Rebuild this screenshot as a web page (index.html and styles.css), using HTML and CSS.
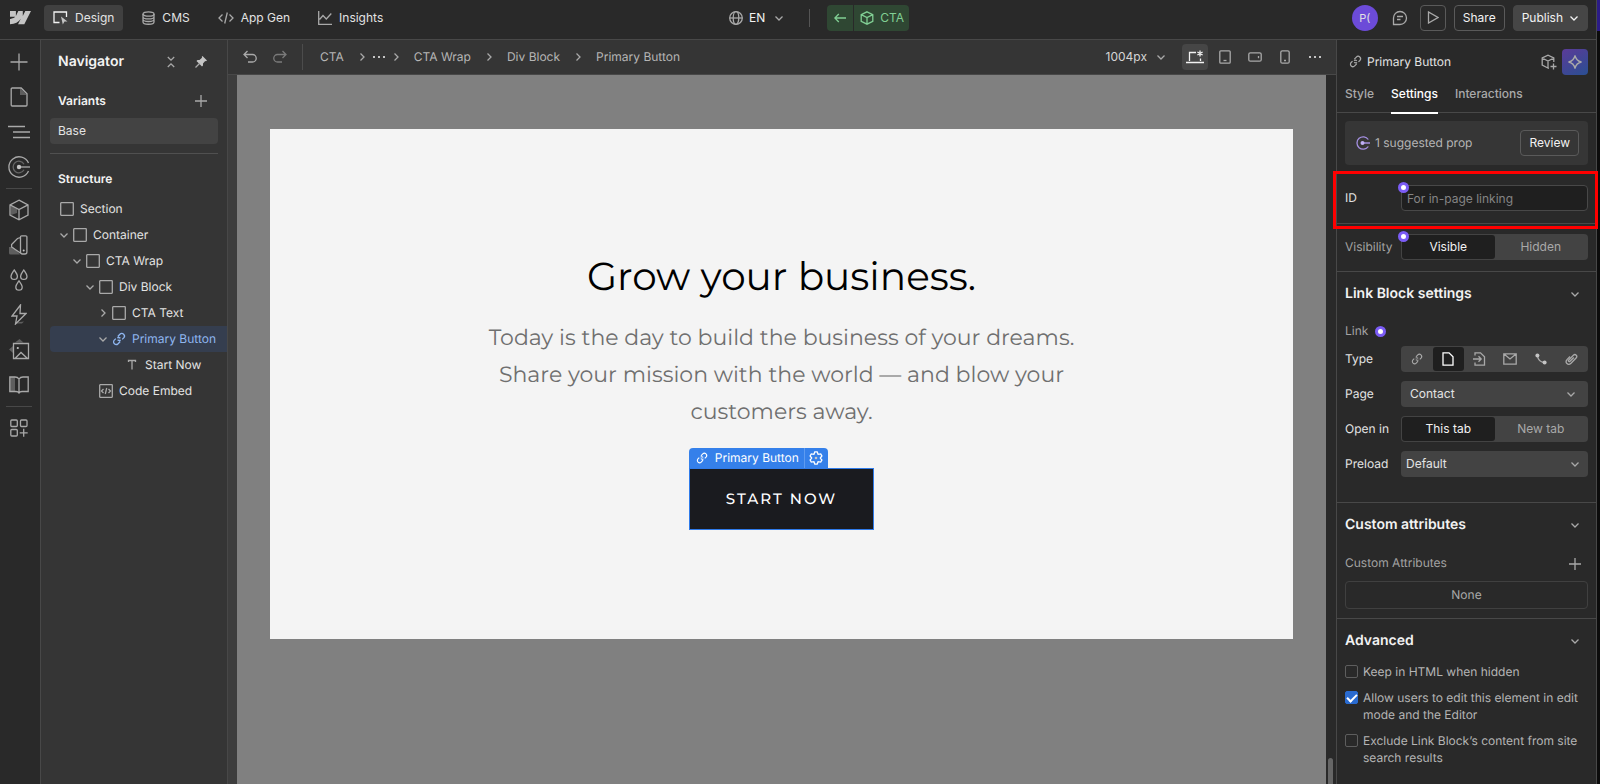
FILE: index.html
```
<!DOCTYPE html>
<html lang="en">

<head>
    <meta charset="UTF-8">
    <meta name="viewport" content="width=device-width, initial-scale=1.0">
    <title>CTA - Designer</title>
    <link rel="stylesheet" href="styles.css">
</head>
<body>
<svg class="defs" aria-hidden="true">
    <symbol id="i-down" viewBox="0 0 10 10"><path d="M1.5 3.5 5 7l3.500-3.500"/></symbol>
    <symbol id="i-right" viewBox="0 0 10 10"><path d="M3.500 1.500 7 5 3.500 8.500"/></symbol>
    <symbol id="i-plus" viewBox="0 0 12 12"><path d="M6 0v12M0 6h12"/></symbol>
    <symbol id="i-box" viewBox="0 0 14 14"><rect x=".7" y=".7" width="12.600" height="12.600" rx=".5"/></symbol>
    <symbol id="i-link" viewBox="0 0 14 14"><path d="M5.800 4.500 7.900 2.300a2.600 2.600 0 0 1 3.800 3.600L10.200 7.400M8.200 9.500 6.100 11.700A2.600 2.600 0 0 1 2.300 8.100L3.800 6.600M5.600 7.800A2.600 2.600 0 0 0 8.700 8M8.400 6.200A2.600 2.600 0 0 0 5.300 6"/></symbol>
    <symbol id="i-cube" viewBox="0 0 14 14"><path d="M7 .8 12.800 3.700v6.600L7 13.200 1.200 10.300V3.700zM1.200 3.700 7 6.600l5.800-2.900M7 6.600v6.600"/></symbol>
    <symbol id="i-dots" viewBox="0 0 14 14"><path class="solid" d="M1 6h2v2H1zM6 6h2v2H6zM11 6h2v2h-2z"/></symbol>
    <symbol id="i-code" viewBox="0 0 16 14"><path d="M4.500 3.500 1 7l3.500 3.500M11.500 3.500 15 7l-3.500 3.500M9.300 1.500 6.700 12.500"/></symbol>
</svg>

<div class="app">
    <header class="topbar">
        <nav class="modes">
            <svg class="logo" width="21" height="14" viewBox="0 0 21 14"><path d="M21 0 14.300 13.300H8l2.800-5.500C8.500 11.200 5.200 13 0 13.300V8s3.300-.2 5.200-2.200H0V0h5.900v4.900L8.300 0h4.500v4.900L15.300 0z"/></svg>
            <button class="mode active"><svg width="15" height="14" viewBox="0 0 15 14"><path d="M6.500 11.500H1V1h12.500v5"/><path class="solid" d="m8 5.500 6.500 5H11.500L9.800 13.500z"/></svg>Design</button>
            <button class="mode"><svg width="13" height="14" viewBox="0 0 13 14"><ellipse cx="6.500" cy="3" rx="5.500" ry="2.200"/><path d="M1 3v8c0 3 11 3 11 0V3M1 5.700c0 2.900 11 2.900 11 0M1 8.300c0 2.900 11 2.900 11 0"/></svg>CMS</button>
            <button class="mode"><svg width="16" height="14"><use href="#i-code"/></svg>App Gen</button>
            <button class="mode"><svg width="14" height="14" viewBox="0 0 14 14"><path d="M.7 0v13.300H14M1.500 8.500 5 4.500l3.300 3.500 5-5.500"/></svg>Insights</button>
        </nav>
        <div class="context">
            <button class="locale"><svg width="14" height="14" viewBox="0 0 14 14"><circle cx="7" cy="7" r="6.300"/><ellipse cx="7" cy="7" rx="2.800" ry="6.300"/><path d="M.7 7h12.600"/></svg>EN<svg width="10" height="10"><use href="#i-down"/></svg></button>
            <div class="crumb-component">
                <button aria-label="Back"><svg width="12" height="10" viewBox="0 0 12 10"><path d="M12 5H.8M4.800 1l-4 4 4 4"/></svg></button>
                <button><svg width="14" height="14"><use href="#i-cube"/></svg>CTA</button>
            </div>
        </div>
        <div class="actions">
            <span class="avatar">P(</span>
            <button class="icon-btn" aria-label="Comments"><svg width="16" height="16" viewBox="0 0 16 16"><path d="M1.500 14.500V8a6.500 6.500 0 1 1 6.500 6.500zM5 6.500h6M5 9.500h3.500"/></svg></button>
            <button class="btn square" aria-label="Preview"><svg width="12" height="13" viewBox="0 0 12 13"><path d="M1.500 1v11l9.500-5.500z"/></svg></button>
            <button class="btn">Share</button>
            <button class="btn publish">Publish<svg width="10" height="10"><use href="#i-down"/></svg></button>
        </div>
    </header>

    <div class="workspace">
        <nav class="rail">
            <button aria-label="Add"><svg width="18" height="18" viewBox="0 0 18 18"><path d="M9 .5v17M.5 9h17"/></svg></button>
            <button aria-label="Pages"><svg width="18" height="20" viewBox="0 0 18 20"><path class="shade" d="M10 1v7h7z"/><path d="M1.200 2a1 1 0 0 1 1-1h9L17 6.800V18a1 1 0 0 1-1 1H2.200a1 1 0 0 1-1-1z"/></svg></button>
            <button aria-label="Navigator"><svg width="22" height="14" viewBox="0 0 22 14"><path d="M0 1.500h17M5 7h17M5 12.500h17"/></svg></button>
            <button aria-label="Components"><svg width="22" height="22" viewBox="0 0 22 22"><path d="M20.500 7A10.200 10.200 0 1 0 20.500 15"/><path class="dim" d="M16 8.200a5.800 5.800 0 1 0 0 5.600"/><path d="M11 11h11"/><circle class="solid" cx="11" cy="11" r="2.200"/></svg></button>
            <hr>
            <button aria-label="Assets library"><svg width="20" height="22" viewBox="0 0 20 22"><path class="shade" d="M2 7l6 3v4l-6 2z"/><path d="M10 1.200 19 5.800v10.400l-9 4.600-9-4.600V5.800zM1 5.800l9 4.700 9-4.700M10 10.500v10.300"/></svg></button>
            <button aria-label="Styles"><svg width="20" height="20" viewBox="0 0 20 20"><path class="shade" d="M0 12h4l7 7.500H1.500A1.500 1.500 0 0 1 0 18z"/><path d="M11.500 2a1.200 1.200 0 0 1 1.200-1.200h4a1.200 1.200 0 0 1 1.200 1.200v15a2 2 0 0 1-2 2h-2.400a2 2 0 0 1-2-2zM11.500 2.500 8.500 3.500 2.600 9.500v2.500l9.500 6.500"/><circle class="solid" cx="14.700" cy="15.500" r="1"/></svg></button>
            <button aria-label="Variables"><svg width="18" height="22" viewBox="0 0 18 22"><path d="M4.200 1C2.500 3.500 1 5.300 1 7.200a3.200 3.200 0 0 0 6.400 0C7.400 5.300 6 3.500 4.200 1zM13.800 1c-1.700 2.500-3.200 4.300-3.200 6.200a3.200 3.200 0 0 0 6.400 0C17 5.300 15.500 3.500 13.800 1zM9 11.800c-1.700 2.500-3.200 4.300-3.200 6.200a3.200 3.200 0 0 0 6.400 0c0-1.900-1.400-3.700-3.200-6.200z"/></svg></button>
            <button aria-label="Interactions"><svg width="16" height="21" viewBox="0 0 16 21"><path class="shade" d="m5 18.500 8-1-2 2H5z"/><path d="M9.500 1 1 12h5L4.500 20 15 9.500H9z"/></svg></button>
            <button aria-label="Assets"><svg width="21" height="21" viewBox="0 0 21 21"><path class="shade" d="M0 10.500 4 7v7zM6 3.500 10.500 0l4 3.500z"/><path d="M4.500 4.500h15v15h-15zM6 19.500l6-6 6.500 6"/><circle class="solid" cx="8.800" cy="9" r="1.100"/></svg></button>
            <button aria-label="Libraries"><svg width="20" height="18" viewBox="0 0 20 18"><path class="shade" d="M1 1h5v14H1z"/><path d="M10 3C9 1.500 7.500 1 6 1H.8v14.500H7c1.500 0 2.500.5 3 1.500.5-1 1.500-1.500 3-1.500h6.200V1H14c-1.500 0-3 .5-4 2zM10 3v13"/></svg></button>
            <hr>
            <button aria-label="Apps"><svg width="18" height="18" viewBox="0 0 18 18"><rect x=".8" y="1" width="6.500" height="6.500" rx="1"/><rect x="10.500" y="1" width="6.500" height="6.500" rx="1"/><rect x=".8" y="10.500" width="6.500" height="6.500" rx="1"/><path d="M13.700 9.800v8M9.700 13.800h8"/></svg></button>
        </nav>

        <aside class="navigator">
            <div class="nav-title">
                <h2>Navigator</h2>
                <button class="icon-btn" aria-label="Collapse all"><svg width="8" height="12" viewBox="0 0 8 12"><path d="m.8 1 3.200 3.200L7.200 1M.8 11 4 7.800 7.200 11"/></svg></button>
                <button class="icon-btn" aria-label="Pin panel"><svg width="12" height="12" viewBox="0 0 12 12"><path class="solid" d="M7.500 0 12 4.500l-1 .8-.8-.2L8 7.500V9.500L7 10.500 1.500 5l1-1h2L7 1.800 6.800.8z"/><path d="M4.500 7.500.5 11.500"/></svg></button>
            </div>
            <div class="nav-sub">
                <h3>Variants</h3>
                <button class="icon-btn" aria-label="Add variant"><svg width="12" height="12"><use href="#i-plus"/></svg></button>
            </div>
            <button class="variant">Base</button>
            <hr>
            <h3 class="structure">Structure</h3>
            <ul class="tree">
                <li class="d0"><svg width="14" height="14"><use href="#i-box"/></svg>Section</li>
                <li class="d1"><svg class="toggle" width="10" height="10"><use href="#i-down"/></svg><svg width="14" height="14"><use href="#i-box"/></svg>Container</li>
                <li class="d2"><svg class="toggle" width="10" height="10"><use href="#i-down"/></svg><svg width="14" height="14"><use href="#i-box"/></svg>CTA Wrap</li>
                <li class="d3"><svg class="toggle" width="10" height="10"><use href="#i-down"/></svg><svg width="14" height="14"><use href="#i-box"/></svg>Div Block</li>
                <li class="d4"><svg class="toggle" width="10" height="10"><use href="#i-right"/></svg><svg width="14" height="14"><use href="#i-box"/></svg>CTA Text</li>
                <li class="d4 selected"><svg class="toggle" width="10" height="10"><use href="#i-down"/></svg><svg width="14" height="14"><use href="#i-link"/></svg>Primary Button</li>
                <li class="d5"><svg width="14" height="14" viewBox="0 0 14 14"><path d="M3.500 4V2.500h7V4M7 2.500v9"/></svg>Start Now</li>
                <li class="d3"><svg width="14" height="14" viewBox="0 0 14 14"><rect x=".7" y=".7" width="12.600" height="12.600" rx=".5"/><path d="m4.500 5-2 2 2 2M9.500 5l2 2-2 2M7.700 4 6.300 10"/></svg>Code Embed</li>
            </ul>
        </aside>

        <main class="stage">
            <div class="toolbar">
                <button class="icon-btn undo" aria-label="Undo"><svg width="14" height="14" viewBox="0 0 14 14"><path d="M4.500 1 1 4.500 4.500 8M1 4.500h8.500a3.700 3.700 0 0 1 0 7.500H5"/></svg></button>
                <button class="icon-btn redo" aria-label="Redo"><svg width="14" height="14" viewBox="0 0 14 14"><path d="M9.500 1 13 4.500 9.500 8M13 4.500H4.500a3.700 3.700 0 0 0 0 7.500H9"/></svg></button>
                <nav class="breadcrumbs">
                    <a href="#">CTA</a>
                    <svg width="10" height="10"><use href="#i-right"/></svg>
                    <svg class="more" width="14" height="14"><use href="#i-dots"/></svg>
                    <svg width="10" height="10"><use href="#i-right"/></svg>
                    <a href="#">CTA Wrap</a>
                    <svg width="10" height="10"><use href="#i-right"/></svg>
                    <a href="#">Div Block</a>
                    <svg width="10" height="10"><use href="#i-right"/></svg>
                    <a href="#">Primary Button</a>
                </nav>
                <button class="size">1004px<svg width="10" height="10"><use href="#i-down"/></svg></button>
                <div class="devices">
                    <button class="active" aria-label="Desktop"><svg width="18" height="14" viewBox="0 0 18 14"><path d="M3.500 11V2.500H10M14.500 8.500v2.500M0 12.500h18M14 .5v6M11.400 2l5.200 3M16.600 2l-5.200 3"/></svg></button>
                    <button aria-label="Tablet"><svg width="12" height="14" viewBox="0 0 12 14"><rect x=".8" y=".8" width="10.400" height="12.400" rx="1"/><path d="M4.500 10.500h3"/></svg></button>
                    <button aria-label="Mobile landscape"><svg width="14" height="10" viewBox="0 0 14 10"><rect x=".8" y=".8" width="12.400" height="8.400" rx="1.500"/><path d="M10.500 4v2.200"/></svg></button>
                    <button aria-label="Mobile portrait"><svg width="10" height="14" viewBox="0 0 10 14"><rect x=".8" y=".8" width="8.400" height="12.400" rx="1.500"/><path d="M4 10.500h2"/></svg></button>
                    <button aria-label="More"><svg width="14" height="14"><use href="#i-dots"/></svg></button>
                </div>
            </div>
            <div class="canvas-wrap">
                <div class="canvas">
                    <section class="cta">
                        <h1>Grow your business.</h1>
                        <p>Today is the day to build the business of your dreams. Share your mission with the world — and blow your customers away.</p>
                        <div class="cta-link">
                            <div class="tag">
                                <span><svg width="12" height="12"><use href="#i-link"/></svg>Primary Button</span>
                                <button aria-label="Element settings"><svg width="14" height="14" viewBox="0 0 14 14"><path d="M5.800.9h2.400l.9 2.400 2.600-.4 1.200 2.100L11.300 7l1.600 2-1.200 2.100-2.600-.4-.9 2.400H5.800l-.9-2.400-2.600.4L1.100 9l1.600-2-1.600-2 1.200-2.100 2.600.4z"/><circle class="solid" cx="7" cy="7" r="1.300"/></svg></button>
                            </div>
                            <a href="#">START NOW</a>
                        </div>
                    </section>
                </div>
                <div class="scroll"></div>
            </div>
        </main>

        <aside class="panel">
            <div class="panel-title">
                <svg width="13" height="13"><use href="#i-link"/></svg>
                <span>Primary Button</span>
                <button class="icon-btn" aria-label="Create component"><svg width="16" height="16" viewBox="0 0 16 16"><path d="M8 14.300 6.800 14 1.200 11.100V4L7 1.200 12.800 4v4M1.200 4 7 7l5.800-3M7 7v7M12.500 9.500v6M9.500 12.500h6"/></svg></button>
                <button class="ai" aria-label="Assistant"><svg width="14" height="14" viewBox="0 0 14 14"><path d="M7 .5C7.800 4.500 9.500 6.200 13.500 7 9.500 7.800 7.800 9.500 7 13.500 6.200 9.500 4.500 7.800.5 7 4.500 6.200 6.200 4.500 7 .5z"/></svg></button>
            </div>
            <div class="tabs">
                <button>Style</button>
                <button class="active">Settings</button>
                <button>Interactions</button>
            </div>
            <div class="suggest">
                <svg width="14" height="14" viewBox="0 0 14 14"><path d="M12.300 3.500A6.200 6.200 0 1 0 12.300 10.500M6.500 7H14"/><circle class="solid" cx="6.500" cy="7" r="2"/></svg>
                <span>1 suggested prop</span>
                <button class="btn">Review</button>
            </div>
            <div class="block id-block">
                <div class="field">
                    <label for="elId">ID</label>
                    <div class="control"><input type="text" id="elId" placeholder="For in-page linking"><i class="dot"></i></div>
                </div>
            </div>
            <div class="block visibility-block">
                <div class="field">
                    <span class="name muted">Visibility</span>
                    <div class="control segment"><button class="on">Visible</button><button>Hidden</button><i class="dot"></i></div>
                </div>
            </div>
            <div class="block link-block">
                <h3>Link Block settings<svg width="10" height="10"><use href="#i-down"/></svg></h3>
                <div class="link-label">Link<i class="dot"></i></div>
                <div class="field">
                    <span class="name">Type</span>
                    <div class="control segment icons">
                        <button aria-label="URL"><svg width="12" height="12"><use href="#i-link"/></svg></button>
                        <button class="on" aria-label="Page"><svg width="12" height="14" viewBox="0 0 12 14"><path d="M1 .8h6l4 4v8.400H1z"/></svg></button>
                        <button aria-label="Page section"><svg width="13" height="14" viewBox="0 0 13 14"><path d="M2 3.500V.8h5.500l4 4v8.400H2v-2.700M0 7h8M5.500 4.300 8.200 7 5.500 9.700"/></svg></button>
                        <button aria-label="Email"><svg width="14" height="12" viewBox="0 0 14 12"><path d="M.8.8h12.400v10.400H.8zM1 1l6 5 6-5"/></svg></button>
                        <button aria-label="Phone"><svg width="12" height="12" viewBox="0 0 12 12"><path d="M2.500 3C3 6.500 5.500 9 9 9.500"/><circle class="solid" cx="2.400" cy="2.400" r="2"/><circle class="solid" cx="9.600" cy="9.600" r="2"/></svg></button>
                        <button aria-label="Attachment"><svg width="13" height="13" viewBox="0 0 13 13"><path d="M8.800 4.500 5 8.300c-1 1-2.300-.4-1.300-1.300L8.400 2.300c2-1.900 4.600.7 2.700 2.700L6 10.200c-3 2.800-6.600-.9-3.800-3.800L5 3.500"/></svg></button>
                    </div>
                </div>
                <div class="field">
                    <label for="page">Page</label>
                    <div class="control select"><select id="page" class="indent"><option>Contact</option></select><svg width="10" height="10" class="wide"><use href="#i-down"/></svg></div>
                </div>
                <div class="field">
                    <span class="name">Open in</span>
                    <div class="control segment"><button class="on">This tab</button><button>New tab</button></div>
                </div>
                <div class="field">
                    <label for="preload">Preload</label>
                    <div class="control select"><select id="preload"><option>Default</option></select><svg width="10" height="10"><use href="#i-down"/></svg></div>
                </div>
            </div>
            <div class="block attr-block">
                <h3>Custom attributes<svg width="10" height="10"><use href="#i-down"/></svg></h3>
                <div class="attr-head"><span>Custom Attributes</span><button class="icon-btn" aria-label="Add attribute"><svg width="12" height="12"><use href="#i-plus"/></svg></button></div>
                <div class="none">None</div>
            </div>
            <div class="block advanced">
                <h3>Advanced<svg width="10" height="10"><use href="#i-down"/></svg></h3>
                <label class="check"><input type="checkbox">Keep in HTML when hidden</label>
                <label class="check"><input type="checkbox" checked>Allow users to edit this element in edit mode and the Editor</label>
                <label class="check"><input type="checkbox">Exclude Link Block’s content from site search results</label>
            </div>
        </aside>
    </div>
</div>
<div class="edge"></div>
</body>

</html>
```
FILE: styles.css
```
*{
    box-sizing:border-box;
    margin:0;
    padding:0;
}
body{
    display:flex;
    height:100vh;
    overflow:hidden;
    background-color:#292929;
    color:#e3e3e3;
    font-family:Inter, sans-serif;
    font-size:12px;
    line-height:18px;
    text-rendering:geometricPrecision;
}
.defs{
    display:none;
}
svg{
    flex:none;
    fill:none;
    stroke:#a9a9a9;
    stroke-width:1.3;
}
.solid{
    fill:#c4c4c4;
    stroke:none;
}
.shade{
    fill:#5e5e5e;
    stroke:none;
}
.dim{
    stroke:#666;
}
button{
    display:flex;
    align-items:center;
    justify-content:center;
    background:none;
    border:none;
    color:inherit;
    font:inherit;
}
h2, h3{
    color:#f2f2f2;
    font-weight:600;
}
h2{
    font-size:14px;
}
h3{
    font-size:12px;
}
.app{
    flex:1;
    display:flex;
    flex-direction:column;
    min-width:0;
    border-right:1px solid #484848;
}
.edge{
    width:3px;
    background:linear-gradient(#2b1c86 31px, #0c0c0c 31px);
}

/* top bar */
.topbar{
    display:grid;
    grid-template-columns:1fr auto 1fr;
    align-items:center;
    height:40px;
    padding:0 8px 4px 10px;
    border-bottom:1px solid #484848;
}
.modes, .context, .actions, .crumb-component{
    display:flex;
    align-items:center;
}
.logo{
    margin-right:13px;
    fill:#c4c4c4;
    stroke:none;
}
.mode{
    height:26px;
    gap:7px;
    padding:0 9px;
    margin-right:10px;
    border-radius:4px;
}
.mode.active{
    background-color:#404040;
}
.mode.active svg{
    stroke:#f2f2f2;
}
.context{
    padding-left:40px;
}
.locale{
    gap:6px;
    padding-right:25px;
    border-right:1px solid #555;
    color:#f2f2f2;
}
.locale svg:last-child{
    margin-left:3px;
}
.crumb-component{
    margin-left:17px;
}
.crumb-component button{
    height:26px;
    padding:0 7px;
    gap:6px;
    background-color:#2f4733;
    color:#81cf94;
    border-radius:4px 0 0 4px;
}
.crumb-component button + button{
    margin-left:1px;
    padding:0 5px 0 6px;
    border-radius:0 4px 4px 0;
}
.crumb-component svg{
    stroke:#81cf94;
}
.actions{
    justify-content:flex-end;
    gap:8px;
}
.avatar{
    width:26px;
    height:26px;
    margin-right:6px;
    border-radius:50%;
    background-color:#6c4bd8;
    font-size:11px;
    line-height:26px;
    text-align:center;
}
.actions .icon-btn{
    margin-right:4px;
}
.btn{
    height:26px;
    padding:0 8px;
    border:1px solid #5a5a5a;
    border-radius:4px;
    color:#f2f2f2;
}
.btn.square{
    width:26px;
    padding:0;
}
.publish{
    gap:6px;
    border-color:#464646;
    background-color:#464646;
}
.publish svg{
    stroke:#f2f2f2;
}

.workspace{
    flex:1;
    display:flex;
    min-height:0;
}

/* left rail */
.rail{
    width:41px;
    border-right:1px solid #484848;
    padding-top:4px;
}
.rail button{
    width:38px;
    height:35px;
}
.rail hr{
    border:none;
    border-top:1px solid #484848;
    width:26px;
    margin:4px 6px 3px;
}

/* navigator */
.navigator{
    width:187px;
    padding-left:9px;
    border-right:1px solid #484848;
    background-color:#353535;
}
.nav-title, .nav-sub{
    display:flex;
    align-items:center;
    gap:20px;
    padding:0 20px 0 8px;
    height:43px;
}
.nav-sub{
    height:35px;
}
.nav-title h2, .nav-sub h3{
    flex:1;
}
.variant{
    width:168px;
    height:26px;
    padding-left:8px;
    justify-content:flex-start;
    border-radius:4px;
    background-color:#434343;
}
.navigator hr{
    margin:9px 9px 0 0;
    border:none;
    border-top:1px solid #505050;
}
.structure{
    padding:16px 8px 8px;
}
.tree{
    list-style:none;
}
.tree li{
    display:flex;
    align-items:center;
    gap:6px;
    height:26px;
    border-radius:4px 0 0 4px;
    white-space:nowrap;
}
.tree .toggle{
    margin-left:-14px;
    margin-right:-2px;
}
.d0{ padding-left:10px; }
.d1{ padding-left:23px; }
.d2{ padding-left:36px; }
.d3{ padding-left:49px; }
.d4{ padding-left:62px; }
.d5{ padding-left:75px; }
.tree .selected{
    background-color:#353e4f;
    color:#8fb6f0;
}
.selected svg:nth-child(2){
    stroke:#8fb6f0;
}

/* canvas */
.stage{
    flex:1;
    display:flex;
    flex-direction:column;
    min-width:0;
}
.toolbar{
    display:flex;
    align-items:center;
    height:35px;
    padding:0 8px 0 15px;
    border-bottom:1px solid #484848;
    background-color:#353535;
    color:#b5b5b5;
}
.redo{
    margin-left:16px;
    opacity:.6;
}
.breadcrumbs{
    flex:1;
    display:flex;
    align-items:center;
    height:26px;
    margin-left:15px;
    padding-left:17px;
    border-left:1px solid #4c4c4c;
}
.breadcrumbs a{
    color:inherit;
    text-decoration:none;
}
.breadcrumbs svg{
    margin:0 13px;
}
.breadcrumbs .more{
    margin:0 -8px;
}
.size{
    gap:9px;
    margin-right:16px;
    color:#d5d5d5;
}
.devices{
    display:flex;
    gap:4px;
}
.devices button{
    width:26px;
    height:26px;
    border-radius:4px;
}
.devices .active{
    background-color:#464646;
}
.devices .active svg{
    stroke:#f2f2f2;
}
.canvas-wrap{
    flex:1;
    display:flex;
    background-color:#3d3d3d;
    padding-left:9px;
}
.canvas{
    flex:1;
    padding:54px 33px;
    background-color:#808080;
}
.scroll{
    display:flex;
    align-items:flex-end;
    width:10px;
    padding:0 3px 0 2px;
    background-color:#292929;
}
.scroll::after{
    content:"";
    flex:1;
    height:26px;
    border-radius:3px 3px 0 0;
    background-color:#666;
}
.cta{
    display:flex;
    flex-direction:column;
    align-items:center;
    padding:122px 20px 109px;
    background-color:#f4f4f4;
    color:#000;
    font-family:Montserrat, Inter, sans-serif;
    text-align:center;
}
.cta h1{
    font-size:39px;
    font-weight:400;
    line-height:50px;
}
.cta p{
    max-width:600px;
    margin:18px 0 38px;
    color:#6f6f6f;
    font-size:22px;
    line-height:37px;
}
.cta-link{
    position:relative;
    font-size:15px;
    font-weight:500;
}
.cta-link a{
    display:block;
    padding:18px 36px;
    border:1px solid #2f7bea;
    background-color:#1a1b1f;
    color:#fff;
    line-height:24px;
    letter-spacing:2px;
    text-decoration:none;
}
.tag{
    position:absolute;
    left:0;
    bottom:100%;
    display:flex;
    height:20px;
    border-radius:4px 4px 0 0;
    background-color:#3580ea;
    color:#fff;
    font-family:Inter, sans-serif;
    font-size:12px;
    font-weight:400;
    line-height:20px;
    white-space:nowrap;
}
.tag span{
    display:flex;
    align-items:center;
    gap:7px;
    padding:0 5px 0 7px;
}
.tag button{
    width:24px;
    border-left:1px solid #5e9bf0;
}
.tag svg{
    stroke:#fff;
}

/* settings panel */
.panel{
    width:260px;
    border-left:1px solid #484848;
}
.panel-title{
    display:flex;
    align-items:center;
    height:43px;
    padding:0 8px 0 12px;
}
.panel-title span{
    flex:1;
    margin-left:5px;
}
.ai{
    width:26px;
    height:26px;
    margin-left:5px;
    border-radius:4px;
    background:linear-gradient(150deg, #5b3b98, #2a4f92);
}
.tabs{
    display:flex;
    gap:17px;
    height:30px;
    padding-left:8px;
    border-bottom:1px solid #484848;
    color:#a9a9a9;
    font-weight:500;
}
.tabs button{
    height:31px;
    padding-bottom:7px;
    border-bottom:2px solid transparent;
}
.tabs .active{
    border-color:#fff;
    color:#fff;
}
.suggest{
    display:flex;
    align-items:center;
    height:44px;
    margin:8px 8px 0;
    padding:0 9px 0 11px;
    border-radius:4px;
    background-color:#363636;
    color:#b5b5b5;
}
.suggest svg{
    stroke:#a48fe0;
}
.suggest .solid{
    fill:#c0b0f5;
}
.suggest span{
    flex:1;
    margin-left:5px;
}
.block{
    position:relative;
    padding:0 8px;
    border-bottom:1px solid #484848;
}
.block h3{
    display:flex;
    align-items:center;
    justify-content:space-between;
    height:44px;
    padding-right:8px;
    font-size:14px;
}
.field{
    display:grid;
    grid-template-columns:56px 1fr;
    align-items:center;
}
.field + .field{
    margin-top:9px;
}
.muted, .link-label, .attr-head{
    color:#a3a3a3;
}
.control{
    position:relative;
    height:26px;
}
.control input{
    width:100%;
    height:26px;
    padding:0 5px;
    border:1px solid #484848;
    border-radius:4px;
    background-color:#1f1f1f;
    color:#e3e3e3;
    font:inherit;
}
.control input::placeholder{
    color:#858585;
}
.dot{
    width:11px;
    height:11px;
    border:3px solid #7b5cf5;
    border-radius:50%;
    background-color:#fff;
}
.control .dot{
    position:absolute;
    left:-3px;
    top:-3px;
}
.id-block{
    padding-top:20px;
    padding-bottom:12px;
}
/* highlight frame around the ID row */
.id-block::after{
    content:"";
    position:absolute;
    inset:6px -2px -6px -4px;
    border:3px solid #f00;
    z-index:1;
}
.visibility-block{
    padding-top:10px;
    padding-bottom:11px;
}
.segment{
    display:flex;
    padding:1px;
    border-radius:4px;
    background-color:#434343;
    color:#a9a9a9;
}
.segment button{
    flex:1;
    border-radius:3px;
}
.segment .on{
    background-color:#1f1f1f;
    color:#f2f2f2;
}
.segment .on svg{
    stroke:#fff;
}
.link-label{
    display:flex;
    align-items:center;
    gap:7px;
    height:30px;
}
.link-block{
    padding-bottom:25px;
}
.select{
    display:grid;
    align-items:center;
}
.select select, .select svg{
    grid-area:1 / 1;
}
.select select{
    height:26px;
    padding:0 5px;
    appearance:none;
    border:none;
    border-radius:4px;
    background-color:#434343;
    color:#e3e3e3;
    font:inherit;
}
.select .indent{
    padding-left:9px;
}
.select svg{
    justify-self:end;
    margin-right:8px;
    pointer-events:none;
}
.select .wide{
    margin-right:12px;
}
.attr-head{
    display:flex;
    align-items:center;
    justify-content:space-between;
    height:34px;
    padding-right:7px;
}
.attr-head span{
    padding-bottom:3px;
}
.none{
    height:28px;
    margin-bottom:9px;
    border:1px solid #404040;
    border-radius:4px;
    color:#a9a9a9;
    line-height:26px;
    text-align:center;
}
.advanced{
    border:none;
    color:#b5b5b5;
}
.check{
    display:grid;
    grid-template-columns:18px 1fr;
    margin-bottom:9px;
    line-height:17px;
}
.check input{
    width:13px;
    height:13px;
    margin-top:2px;
    appearance:none;
    border:1px solid #5e5e5e;
    border-radius:2px;
}
.check input:checked{
    display:grid;
    place-items:center;
    border-color:#2a6bd0;
    background-color:#2a6bd0;
}
.check input:checked::after{
    content:"";
    width:4px;
    height:8px;
    margin-bottom:2px;
    border:solid #fff;
    border-width:0 2px 2px 0;
    transform:rotate(45deg);
}
```
